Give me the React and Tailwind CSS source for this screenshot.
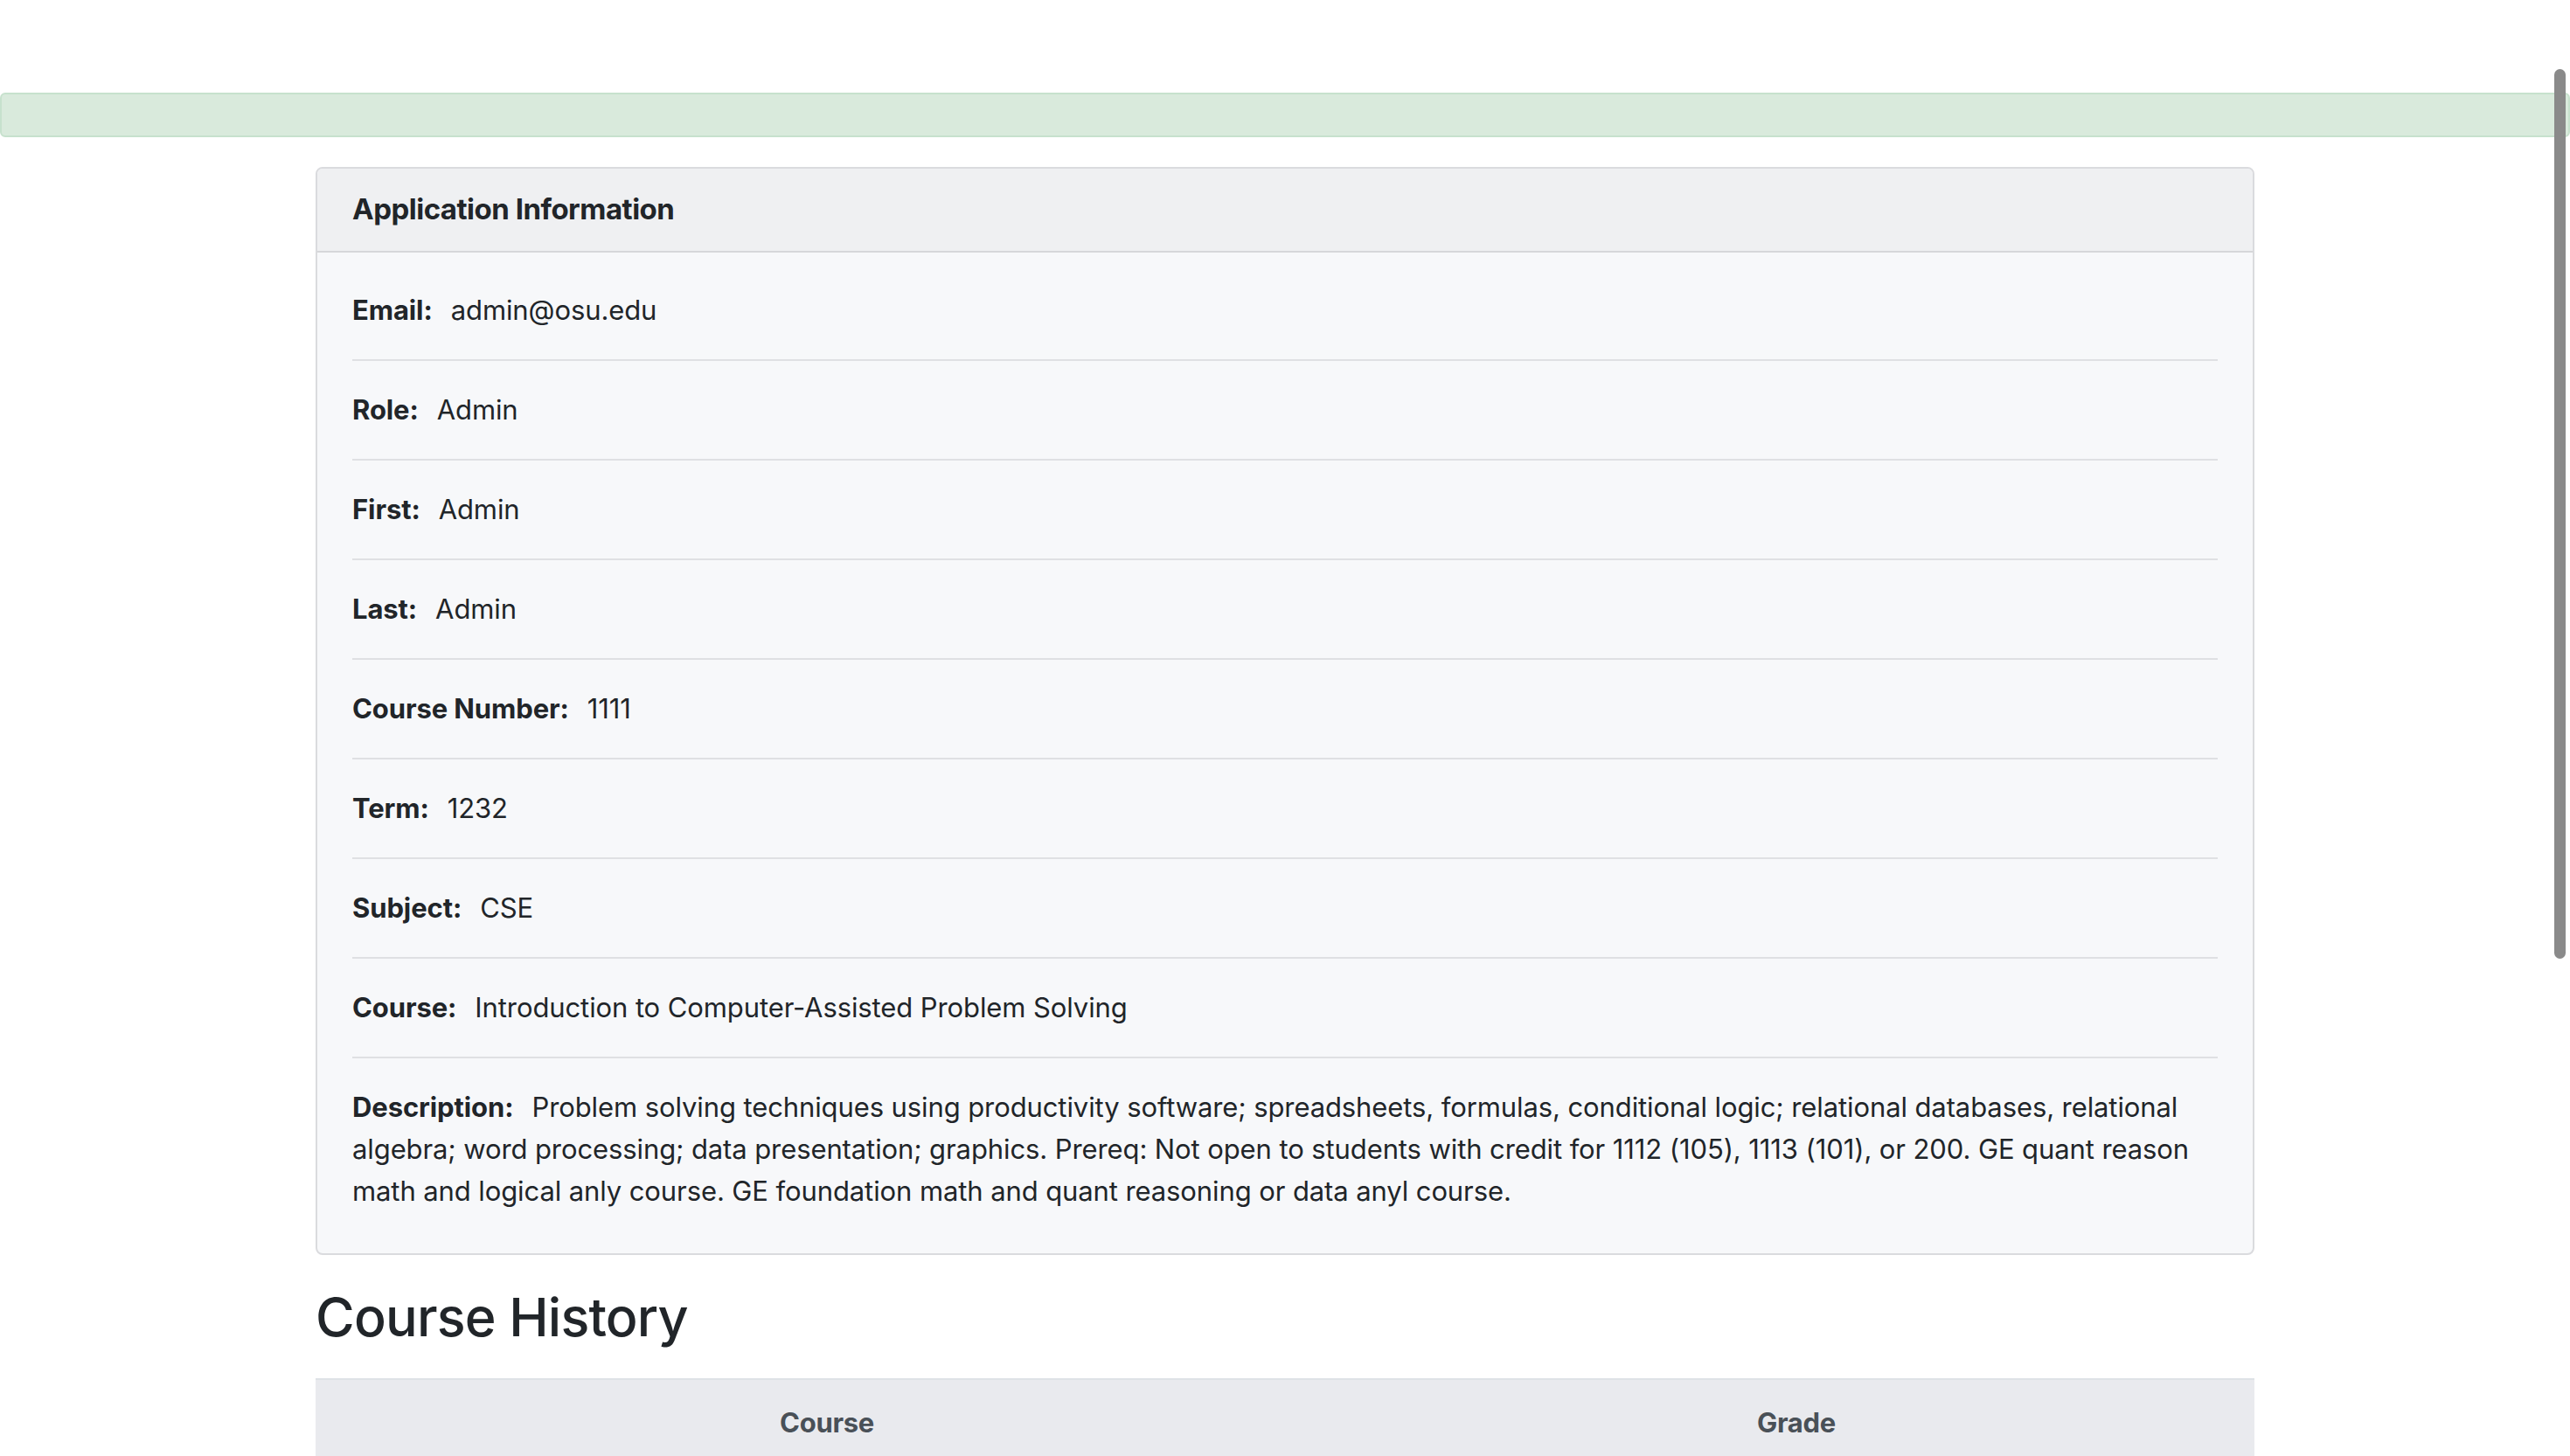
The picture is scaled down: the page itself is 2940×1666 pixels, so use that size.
const rows = [
  { label: 'Email:', value: 'admin@osu.edu' },
  { label: 'Role:', value: 'Admin' },
  { label: 'First:', value: 'Admin' },
  { label: 'Last:', value: 'Admin' },
  { label: 'Course Number:', value: '1111' },
  { label: 'Term:', value: '1232' },
  { label: 'Subject:', value: 'CSE' },
  { label: 'Course:', value: 'Introduction to Computer-Assisted Problem Solving' },
  {
    label: 'Description:',
    value:
      'Problem solving techniques using productivity software; spreadsheets, formulas, conditional logic; relational databases, relational algebra; word processing; data presentation; graphics. Prereq: Not open to students with credit for 1112 (105), 1113 (101), or 200. GE quant reason math and logical anly course. GE foundation math and quant reasoning or data anyl course.',
  },
];

export default function App() {
  return (
    <div className="relative min-h-[1666px] bg-white text-[#212529] font-['Inter',sans-serif] overflow-hidden">
      {/* status bar */}
      <div className="pt-[106px]">
        <div className="h-[51px] w-full rounded-[6px] border-2 border-[#c7e1cd] bg-[#d9eadc]" />
      </div>

      <div className="mx-auto w-[2218px] pt-[34px]">
        {/* Application info card */}
        <section className="rounded-[8px] border-2 border-[#dadbde] bg-[#f7f8fa] overflow-hidden">
          <div className="h-[96px] flex items-center px-[40px] bg-[#eff0f2] border-b-2 border-[#d6d7da]">
            <h3 className="text-[33px] font-bold tracking-[-0.5px]">Application Information</h3>
          </div>
          <div className="px-[40px] pt-[10px] pb-[15px]">
            {rows.map((r, i) => (
              <div
                key={r.label}
                className={`py-[32px] text-[31px] leading-[48px] tracking-[-0.1px] ${
                  i < rows.length - 1 ? 'border-b-2 border-[#dfe0e3]' : ''
                }`}
              >
                <span className="font-bold mr-[21px]">{r.label}</span>
                {r.value}
              </div>
            ))}
          </div>
        </section>

        {/* Course history */}
        <h2 className="mt-[33px] mb-[32px] text-[61px] leading-[76px] font-medium tracking-[-0.8px]">Course History</h2>
        <div className="grid grid-cols-[1170px_1fr] h-[100px] items-center bg-[#e9eaee] border-t-2 border-[#dee2e6] text-[31px] font-bold text-[#495057] tracking-[-0.3px]">
          <div className="text-center">Course</div>
          <div className="text-center">Grade</div>
        </div>
      </div>

      {/* overlay scrollbar */}
      <div className="absolute right-[5px] top-[79px] w-[13px] h-[1018px] rounded-full bg-[#8a8a8a]" />
    </div>
  );
}
